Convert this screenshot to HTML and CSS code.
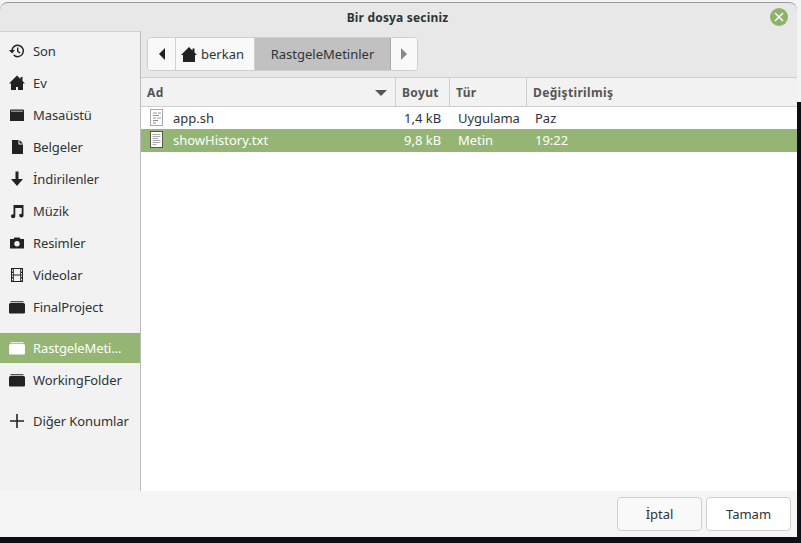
FILE: index.html
```html
<!DOCTYPE html>
<html lang="tr">
<head>
<meta charset="utf-8">
<title>Bir dosya seciniz</title>
<link rel="stylesheet" href="styles.css">
</head>
<body>
<div class="window">
  <header class="titlebar">
    <span class="title">Bir dosya seciniz</span>
    <span class="close"><svg width="10" height="10" viewBox="0 0 10 10"><path d="M1 1l8 8M9 1l-8 8" stroke="#fff" stroke-width="1.5" fill="none"/></svg></span>
  </header>
  <div class="main">
    <nav class="sidebar">
      <div class="place"><svg class="ico" viewBox="0 0 16 16"><path d="M3 8a5.7 5.7 0 1 1 1.7 4" fill="none" stroke="#222" stroke-width="1.5"/><path d="M0 7h6L3 10.500z" fill="#222"/><path d="M8.700 4.500V8.300l2.500 1.700" fill="none" stroke="#222" stroke-width="1.400"/></svg><span>Son</span></div>
      <div class="place"><svg class="ico" viewBox="0 0 16 16"><path d="M8 .5L0 8.500H2V15H7V12H9V15H14V8.500H16L13.500 6V2H11.500V4Z" fill="#222"/></svg><span>Ev</span></div>
      <div class="place"><svg class="ico" viewBox="0 0 16 16"><path d="M1 3.500a1 1 0 0 1 1-1h12a1 1 0 0 1 1 1V14H1ZM2 4.500V3.800H14V4.500Z" fill="#222" fill-rule="evenodd"/></svg><span>Masaüstü</span></div>
      <div class="place"><svg class="ico" viewBox="0 0 16 16"><path d="M3 1H9.500V5.500H14V15H3ZM10.500 1L14 4.500H10.500Z" fill="#222"/></svg><span>Belgeler</span></div>
      <div class="place"><svg class="ico" viewBox="0 0 16 16"><path d="M6.500 0.500H9.500V8H14L8 15L2 8H6.500Z" fill="#222"/></svg><span>İndirilenler</span></div>
      <div class="place"><svg class="ico" viewBox="0 0 16 16"><path d="M4.500 2H14.500V12.500A2.200 1.900 0 1 1 12.700 10.700V5H6.300V13.200A2.200 1.900 0 1 1 4.500 11.400Z" fill="#222"/></svg><span>Müzik</span></div>
      <div class="place"><svg class="ico" viewBox="0 0 16 16"><path fill-rule="evenodd" d="M1 4H4.500L5.500 2.500H10.500L11.500 4H15V13.500H1ZM8 6A2.700 2.700 0 1 0 8 11.400A2.700 2.700 0 1 0 8 6Z" fill="#222"/></svg><span>Resimler</span></div>
      <div class="place"><svg class="ico" viewBox="0 0 16 16"><path fill-rule="evenodd" d="M2 1H14V15H2ZM4.800 2V7.500H11.200V2ZM4.800 8.500V14H11.200V8.500ZM3 2.500V4.500H4V2.500ZM3 6V7.500H4V6ZM3 8.500V10H4V8.500ZM3 11.500V13.500H4V11.500ZM12 2.500V4.500H13V2.500ZM12 6V7.500H13V6ZM12 8.500V10H13V8.500ZM12 11.500V13.500H13V11.500Z" fill="#222"/></svg><span>Videolar</span></div>
      <div class="place"><svg class="ico wide" viewBox="0 0 16 14"><path d="M1.500 1.200H14.500V2.300H1.500ZM0 4.500Q0 3 1.500 3H14.500Q16 3 16 4.500V12.500Q16 13.500 15 13.500H1Q0 13.500 0 12.500Z" fill="#222"/></svg><span>FinalProject</span></div>
      <div class="sep"></div>
      <div class="place active"><svg class="ico wide" viewBox="0 0 16 14"><path d="M1.500 1.200H14.500V2.300H1.500ZM0 4.500Q0 3 1.500 3H14.500Q16 3 16 4.500V12.500Q16 13.500 15 13.500H1Q0 13.500 0 12.500Z" fill="#fff"/></svg><span>RastgeleMeti…</span></div>
      <div class="place"><svg class="ico wide" viewBox="0 0 16 14"><path d="M1.500 1.200H14.500V2.300H1.500ZM0 4.500Q0 3 1.500 3H14.500Q16 3 16 4.500V12.500Q16 13.500 15 13.500H1Q0 13.500 0 12.500Z" fill="#222"/></svg><span>WorkingFolder</span></div>
      <div class="sep small"></div>
      <div class="place"><svg class="ico" viewBox="0 0 16 16"><path d="M7.200 1H8.800V7.200H15V8.800H8.800V15H7.200V8.800H1V7.200H7.200Z" fill="#222"/></svg><span>Diğer Konumlar</span></div>
    </nav>
    <section class="content">
      <div class="pathbar">
        <div class="crumbs">
          <button class="crumb back"><svg width="6" height="12" viewBox="0 0 6 12"><path d="M6 0V12L0 6Z" fill="#222"/></svg></button>
          <button class="crumb home"><svg width="16" height="15" viewBox="0 0 16 15"><path d="M8 0L0 8H2V15H14V8H16L13.500 5.500V1.500H11.500V3.500Z" fill="#222"/></svg><span>berkan</span></button>
          <button class="crumb current">RastgeleMetinler</button>
          <button class="crumb next"><svg width="6" height="12" viewBox="0 0 6 12"><path d="M0 0V12L6 6Z" fill="#888"/></svg></button>
        </div>
      </div>
      <div class="table">
        <div class="row head">
          <div class="c name">Ad<svg class="sort" width="12" height="6" viewBox="0 0 12 6"><path d="M0 0H12L6 6Z" fill="#555"/></svg></div>
          <div class="c size">Boyut</div>
          <div class="c type">Tür</div>
          <div class="c date">Değiştirilmiş</div>
        </div>
        <div class="row file">
          <div class="c name"><svg class="fi" width="14" height="18" viewBox="0 0 14 18"><rect x=".5" y=".5" width="12" height="16" fill="#fff" stroke="#aaa"/><path d="M3 4h4M8 4h3M3 6.500h6M3 9h3M7 9h4" stroke="#8a9ab5"/><path d="M3 11.500h5" stroke="#888"/><path d="M3 14h3" stroke="#c66"/></svg><span>app.sh</span></div>
          <div class="c size">1,4 kB</div>
          <div class="c type">Uygulama</div>
          <div class="c date">Paz</div>
        </div>
        <div class="row file selected">
          <div class="c name"><svg class="fi" width="14" height="18" viewBox="0 0 14 18"><rect x=".5" y=".5" width="12" height="16" fill="#fff" stroke="#555"/><path d="M2.500 3.500h8M2.500 5.500h8M2.500 7.500h6M2.500 9.500h8M2.500 11.500h8M2.500 13.500h4" stroke="#aaa"/></svg><span>showHistory.txt</span></div>
          <div class="c size">9,8 kB</div>
          <div class="c type">Metin</div>
          <div class="c date">19:22</div>
        </div>
      </div>
    </section>
  </div>
  <footer class="actions">
    <button class="btn cancel">İptal</button>
    <button class="btn">Tamam</button>
  </footer>
</div>
</body>
</html>
```
FILE: styles.css
```css
* { box-sizing: border-box; }
html, body { margin: 0; height: 100%; }
body {
  width: 801px; height: 543px; overflow: hidden;
  background: linear-gradient(#f4f4f4 0, #f4f4f4 102px, #0f0e17 102px);
  font: 13px "Noto Sans", "Open Sans", sans-serif;
  color: #2e3436;
  padding: 2px 4px 6px 0;
}
.window {
  height: 535px; display: flex; flex-direction: column;
  background: #e8e8e8; border-radius: 8px 8px 0 0;
  border-top: 1px solid #9a9a9a; overflow: hidden;
}
.titlebar {
  height: 28px; flex: none; display: flex; align-items: center; justify-content: center;
  position: relative; font-weight: 700; font-size: 12px; color: #2e3436;
}
.title { letter-spacing: .18px; margin-right: 2px; }
.close {
  position: absolute; right: 9px; top: 5px; width: 18px; height: 18px; border-radius: 50%;
  background: #8fb26b; display: flex; align-items: center; justify-content: center;
}
.main { flex: 1; display: flex; min-height: 0; }
.sidebar {
  width: 141px; flex: none; background: #f2f2f2; border-right: 1px solid #bdbdbd;
  border-top: 1px solid #cfcfcf; padding-top: 3px;
}
.place { height: 32px; display: flex; align-items: center; padding-left: 9px; gap: 8px; color: #2e3436; white-space: nowrap; letter-spacing: -.1px; }
.place.active { height: 30px; margin-bottom: 1px; background: #94b573; color: #fff; }
.ico { width: 16px; height: 16px; flex: none; }
.ico.wide { height: 14px; }
.sep { height: 10px; }
.sep.small { height: 9px; }
.content { flex: 1; min-width: 0; display: flex; flex-direction: column; }
.pathbar { height: 46px; flex: none; padding: 6px 0 0 6px; }
.crumbs { display: inline-flex; height: 34px; border: 1px solid #cfcfcf; border-radius: 4px; background: #f9f9f9; overflow: hidden; }
.crumb { font: inherit; color: #2e3436; border: 0; background: #f9f9f9; padding: 0; display: flex; align-items: center; justify-content: center; border-right: 1px solid #cfcfcf; }
.crumb.back { width: 28px; }
.crumb.home { width: 79px; gap: 4px; justify-content: flex-start; padding-left: 5px; }
.crumb.current { width: 136px; background: #c1c1c1; border-right-color: #aaa; }
.crumb.next { width: 26px; border-right: 0; }
.table { flex: 1; background: #fff; border-top: 1px solid #cfcfcf; }
.row { display: flex; height: 22px; align-items: center; }
.row.head { height: 29px; background: #f2f2f2; border-bottom: 1px solid #cfcfcf; font-weight: 700; color: #555; font-size: 12px; letter-spacing: .35px; }
.row.file { color: #2e3436; }
.row.file.selected { height: 23px; color: #fff; background: #94b573; padding-bottom: 1px; }
.c { flex: none; height: 100%; display: flex; align-items: center; white-space: nowrap; padding-left: 7px; }
.name { width: 255px; }
.size { width: 54px; }
.type { width: 77px; }
.date { flex: 1; }
.head .c { padding-left: 6px; border-right: 1px solid #cfcfcf; position: relative; }
.head .date { border-right: 0; }
.sort { position: absolute; right: 8px; top: 12px; }
.file .name { padding-left: 9px; gap: 9px; }
.file .size { padding-left: 8px; }
.file .type { padding-left: 8px; letter-spacing: -.05px; }
.file .date { padding-left: 8px; }
.fi { flex: none; }
.actions { height: 46px; flex: none; background: #f5f5f5; display: flex; align-items: center; justify-content: flex-end; gap: 4px; padding: 0 6px 0 0; }
.btn { width: 85px; height: 34px; font: inherit; color: #2e3436; background: #fff; border: 1px solid #cfcfcf; border-radius: 4px; }
.btn.cancel { background: #f9f9f9; }
```
